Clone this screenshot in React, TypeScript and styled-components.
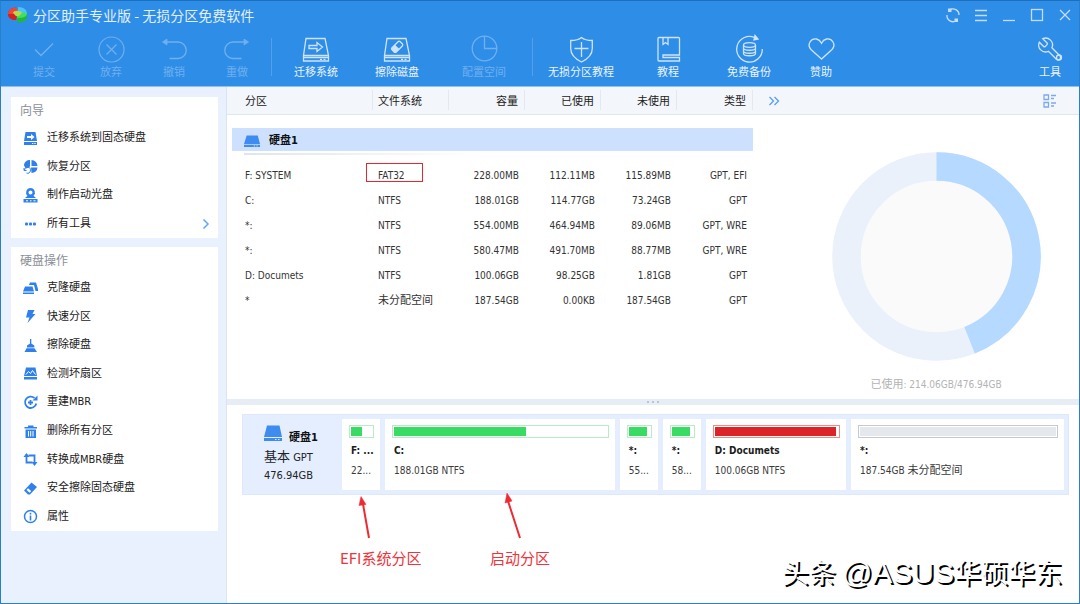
import React from "react";
import styled, { createGlobalStyle } from "styled-components";

const Global = createGlobalStyle`
  *, *::before, *::after { box-sizing: border-box; }
  body {
    margin: 0;
    font-family: "DejaVu Sans Condensed", "Noto Sans CJK SC", sans-serif;
    font-size: 11px;
    line-height: 16px;
    color: #222;
    background: #fff;
  }
  button {
    margin: 0;
    padding: 0;
    border: 0;
    background: none;
    color: inherit;
    font: inherit;
    cursor: pointer;
  }
  ul { margin: 0; padding: 0; list-style: none; }
  h1, h2, p { margin: 0; font: inherit; }
  svg { display: block; flex: none; }
`;

const Window = styled.div`
  display: flex;
  flex-direction: column;
  min-height: 100vh;
  border: 1px solid #2b7fc9;
  border-top-color: #1b6fbd;
`;

/* ---------- header ---------- */

const Header = styled.header`
  color: #fff;
  background: #2e8de7;
  border-bottom: 1px solid #8fc1f3;
`;

const TitleBar = styled.div`
  display: flex;
  align-items: center;
  height: 28px;
  padding-left: 7px;
`;

const Title = styled.h1`
  flex: 1;
  margin-left: 6px;
  font-family: "Noto Sans CJK SC", sans-serif;
  font-size: 14px;
  line-height: 20px;
  color: #e2effd;
`;

const WindowButton = styled.button`
  display: grid;
  place-items: center;
  width: 28px;
  height: 28px;
  color: #c3defa;
`;

const Toolbar = styled.nav`
  display: flex;
  align-items: flex-start;
  height: 57px;
  padding-left: 9px;
`;

const ToolGroup = styled.div<{ $columns: string }>`
  display: grid;
  grid-template-columns: ${(p) => p.$columns};
`;

const ToolButton = styled.button`
  display: flex;
  flex-direction: column;
  align-items: center;
  gap: 3px;
  padding-top: 5px;
  white-space: nowrap;
  color: #cfe4fb;
  &:disabled { color: #6fb0ef; cursor: default; }
`;

const ToolLabel = styled.span<{ $dim?: boolean }>`
  line-height: 16px;
  color: ${(p) => (p.$dim ? "#6fb0ef" : "#eaf4ff")};
`;

const Divider = styled.span<{ $before: number; $after: number }>`
  width: 1px;
  height: 38px;
  margin: 9px ${(p) => p.$after}px 0 ${(p) => p.$before}px;
  background: #559fea;
`;

const ToolEnd = styled.div`
  display: grid;
  width: 58px;
  margin-left: auto;
`;

/* ---------- sidebar ---------- */

const Body = styled.div`
  display: flex;
  flex: 1;
`;

const Sidebar = styled.aside`
  display: flex;
  flex-direction: column;
  gap: 9px;
  width: 226px;
  padding: 10px 8px 10px 10px;
  background: #eaf1fe;
  border-right: 1px solid #dbe4f0;
`;

const Panel = styled.section`
  padding: 4px 0 0;
  background: #fff;
`;

const PanelTitle = styled.h2`
  padding: 0 0 3px 9px;
  font-size: 12px;
  line-height: 20px;
  color: #8b8f96;
`;

const PanelList = styled.ul<{ $height: number }>`
  display: grid;
  grid-auto-rows: 1fr;
  min-height: ${(p) => p.$height}px;
`;

const PanelItem = styled.button`
  display: flex;
  align-items: center;
  width: 100%;
  height: 100%;
  padding: 0 7px 0 12px;
  color: #1b1b1b;
  text-align: left;
`;

const PanelText = styled.span`
  flex: 1;
  margin-left: 9px;
`;

/* ---------- partition table ---------- */

const Main = styled.main`
  display: flex;
  flex: 1;
  flex-direction: column;
  min-width: 0;
`;

const TopPane = styled.section`
  display: grid;
  grid-template-columns: auto 1fr;
`;

const Table = styled.table`
  align-self: start;
  width: 526px;
  table-layout: fixed;
  border-collapse: separate;
  border-spacing: 0;
  font-size: 10px;
`;

const HeadCell = styled.th<{ $right?: boolean }>`
  height: 28px;
  padding: 2px 7px 0 ${(p) => (p.$right ? 0 : 5)}px;
  font-size: 11px;
  font-weight: 400;
  text-align: ${(p) => (p.$right ? "right" : "left")};
  background: linear-gradient(#e3e9f1, #e3e9f1) right 3px / 1px 20px no-repeat #f3f6fb;
  border-bottom: 1px solid #dee6f0;
  &:first-child { padding-left: 18px; }
`;

const DiskCell = styled.th`
  padding: 13px 0 12px 5px;
  font-size: 11px;
  text-align: left;
`;

const DiskBand = styled.div`
  display: flex;
  align-items: center;
  gap: 9px;
  height: 23px;
  padding: 2px 0 0 12px;
  color: #111;
  background: #cde1fe;
`;

const DiskRule = styled.div`
  height: 2px;
  margin: 2px 270px -4px 12px;
  background: linear-gradient(90deg, #dfe5ee, #fff);
`;

const Cell = styled.td<{ $right?: boolean }>`
  position: relative;
  height: 25px;
  padding: 1px 6px 0 ${(p) => (p.$right ? 0 : 5)}px;
  text-align: ${(p) => (p.$right ? "right" : "left")};
  white-space: nowrap;
  color: #333;
  &:first-child { padding-left: 18px; }
`;

const Han = styled.span`
  font-size: 11px;
`;

const Highlight = styled.span`
  position: absolute;
  top: 0;
  left: -7px;
  width: 57px;
  height: 19px;
  border: 1px solid #e8262e;
`;

/* ---------- usage chart ---------- */

const ChartSide = styled.div`
  display: flex;
  flex-direction: column;
`;

const ChartHead = styled.div`
  display: flex;
  align-items: center;
  justify-content: space-between;
  height: 28px;
  padding: 0 23px 0 15px;
  background: #f3f6fb;
  border-bottom: 1px solid #dee6f0;
`;

const ChartFigure = styled.figure`
  display: flex;
  flex-direction: column;
  align-items: center;
  gap: 16px;
  margin: 0;
  padding: 37px 0 6px 40px;
`;

const ChartCaption = styled.figcaption`
  font-size: 10px;
  color: #b3b3b3;
`;

/* ---------- disk map ---------- */

const Splitter = styled.div`
  display: flex;
  align-items: center;
  justify-content: center;
  gap: 3px;
  height: 6px;
  background: #e6edf5;
`;

const SplitterDot = styled.span`
  width: 2px;
  height: 2px;
  background: #b9c6d6;
`;

const BottomPane = styled.section`
  position: relative;
  flex: 1;
  padding: 9px 10px 107px 15px;
`;

const DiskMap = styled.div`
  display: flex;
  padding: 4px 4px 4px 0;
  background: #e4eefe;
  border: 1px solid #dde9fa;
`;

const DiskInfo = styled.div`
  width: 99px;
  padding: 6px 0 0 21px;
`;

const DiskName = styled.div`
  display: flex;
  align-items: flex-end;
  gap: 7px;
  height: 21px;
  margin-bottom: 2px;
  font-weight: 700;
  color: #111;
  & > svg { align-self: flex-start; }
`;

const DiskKind = styled.p`
  font-size: 11px;
  line-height: 18px;
`;

const KindName = styled.span`
  font-size: 13px;
`;

const Partitions = styled.div`
  display: grid;
  flex: 1;
  grid-template-columns: 38px 231fr 38px 38px 141fr 214fr;
  gap: 5px;
  min-width: 0;
`;

const Partition = styled.button`
  min-width: 0;
  padding: 6px 6px 10px 7px;
  background: #fff;
  text-align: left;
  font-size: 10px;
`;

const Bar = styled.div<{ $edge: string }>`
  height: 13px;
  padding: 1px;
  border: 1px solid ${(p) => p.$edge};
  background: #fff;
`;

const BarFill = styled.div<{ $color: string }>`
  height: 9px;
  background: ${(p) => p.$color};
`;

const PartText = styled.div<{ $strong?: boolean }>`
  overflow: hidden;
  padding-left: 2px;
  font-weight: ${(p) => (p.$strong ? 700 : 400)};
  line-height: 18px;
  margin-top: ${(p) => (p.$strong ? 4 : 2)}px;
  white-space: nowrap;
  color: ${(p) => (p.$strong ? "#1c1c1c" : "#3a3a3a")};
`;

const Note = styled.p<{ $left: number }>`
  position: absolute;
  top: 143px;
  left: ${(p) => p.$left}px;
  font-family: "Noto Sans CJK SC", sans-serif;
  font-size: 15px;
  line-height: 20px;
  color: #f0323a;
`;

const Arrows = styled.svg`
  position: absolute;
  top: 87px;
  left: 127px;
`;

const Signature = styled.p`
  position: absolute;
  right: 17px;
  bottom: 12px;
  font-family: "Noto Sans CJK SC", sans-serif;
  font-size: 27px;
  line-height: 36px;
  color: #fff;
  text-shadow: 2px 2px 0 #000;
  white-space: nowrap;
`;

const Handle = styled.span`
  font-family: "Liberation Sans", sans-serif;
  font-size: 30px;
`;

/* ---------- icons ---------- */

const blue = "#2f80ed";

const Line = ({ w = 28, h = 28, children }: { w?: number; h?: number; children: React.ReactNode }) => (
  <svg width={w} height={h} viewBox={`0 0 ${w} ${h}`} fill="none" stroke="currentColor" strokeWidth="1.3" overflow="visible" aria-hidden="true">
    {children}
  </svg>
);

const Drive = () => (
  <>
    <path d="M4 4.500H23L26.500 21.500H1.500Z M1.500 21.500V27H26.500V21.500 M1.500 23.500H26.500" />
    <path d="M18 25.300h2M21.500 25.300h2" />
  </>
);

const toolIcons: Record<string, React.ReactNode> = {
  commit: <Line><path d="M5 15.500l6 6L23 9.500" /></Line>,
  discard: <Line><circle cx="14.500" cy="15.500" r="12.500" strokeWidth="1.200" /><path d="M9.500 10.500l10 10M19.500 10.500l-10 10" /></Line>,
  undo: <Line><path d="M5 8H18a8 8 0 0 1 0 16.500H9.500" /><path d="M7 5v6L2.500 8z" fill="currentColor" strokeWidth="0.800" /></Line>,
  redo: <Line><path d="M23 8H10a8 8 0 0 0 0 16.500H18.500" /><path d="M21 5v6L25.500 8z" fill="currentColor" strokeWidth="0.800" /></Line>,
  migrate: <Line><Drive /><path d="M7 11.500h8V8.500l5.500 4.500-5.500 4.500v-3H7z" /></Line>,
  wipe: <Line><Drive /><g transform="rotate(-45 14 13)"><rect x="8.500" y="10" width="11.500" height="6" rx="1.500" /><path d="M9 10.500h4.500v5H9z" fill="currentColor" /></g></Line>,
  space: <Line><circle cx="14.500" cy="14.500" r="12.300" /><path d="M14.500 2v12.500H27" /></Line>,
  shield: <Line><path d="M14.500 3.500c3 2.500 7 3 10.800 3v8c0 6-4.800 10.500-10.800 13.500C8.500 25 3.700 20.500 3.700 14.500v-8c3.800 0 7.800-.5 10.800-3z" /><path d="M14.500 8v15M7.500 14.500h14" /></Line>,
  book: <Line><path d="M4 26V4.500q0-1 1-1H24.500q1 0 1 1V21H9v2.500H25.500V27H5q-1 0-1-1z" /><path d="M9 3.500v7l2.500-2 2.500 2v-7" /></Line>,
  backup: <Line><path d="M19.500 3.500A12.800 12.800 0 1 0 27.300 15" /><path d="M20 1.500l3 3.500-4 .8z" fill="currentColor" /><ellipse cx="14.500" cy="11" rx="6" ry="2.300" /><path d="M8.500 11v8.500c0 3 12 3 12 0v-8.500M8.500 14c0 3 12 3 12 0M8.500 17c0 3 12 3 12 0" /></Line>,
  heart: <Line><path d="M14.500 25L4 15.500C-.5 10.500 4 4 9.500 5c2.500.6 4 2.200 5 4.200 1-2 2.500-3.600 5-4.200 5.500-1 10 5.500 5.500 10.500z" /></Line>,
  wrench: (
    <Line>
      <path
        transform="matrix(-1.150 0 0 1.150 28 1.800)"
        d="M14.700 6.300a1 1 0 0 0 0 1.400l1.600 1.600a1 1 0 0 0 1.400 0l3.770-3.770a6 6 0 0 1-7.940 7.940l-6.910 6.910a2.120 2.120 0 0 1-3-3l6.910-6.910a6 6 0 0 1 7.940-7.940l-3.760 3.760z"
        strokeWidth="1.150"
      />
      <circle cx="23" cy="23.500" r="2.500" />
    </Line>
  ),
};

const Small = ({ children }: { children: React.ReactNode }) => (
  <svg width="15" height="15" viewBox="0 0 15 15" fill={blue} aria-hidden="true">{children}</svg>
);

const sideIcons: Record<string, React.ReactNode> = {
  migrate: <Small><path d="M2.500 1h10l1.500 9H1zM1 11h13v3H1z" /><path d="M4 5h4V3l3.500 3L8 9V7H4z" fill="#fff" /><path d="M9 12.500h1.300M11.300 12.500h1.300" stroke="#fff" /></Small>,
  recover: <Small><path d="M7 1v6.500L3.500 9.500A6 6 0 0 1 1 6.500C1 3 4 1 7 1zM8.500 1A6.200 6.200 0 0 1 14.500 7H8.500zM8 8.500h6.500a6.200 6.200 0 0 1-6 5.500z" /><path d="M1.500 11a3 3 0 1 1 2 3M1 9v2.500h2.500" fill="none" stroke={blue} /></Small>,
  disc: <Small><path fillRule="evenodd" d="M7.500 0a4.500 4.500 0 0 1 3 7.800L13 10H2l2.500-2.200A4.500 4.500 0 0 1 7.500 0zm0 2.500a2 2 0 1 0 0 4 2 2 0 0 0 0-4z" /><path d="M.5 11h14v3.500H.5z" /><path d="M3 12.800h2M7 12.800h1.500M10.500 12.800h2" stroke="#fff" /></Small>,
  dots: <Small><rect x="2" y="6.500" width="3" height="3" rx="1" /><rect x="6" y="6.500" width="3" height="3" rx="1" /><rect x="10" y="6.500" width="3" height="3" rx="1" /></Small>,
  clone: <Small><path d="M6 4l1-2.500h6L15 8v2h-2.500L11 4z" /><path d="M2 5.500h7.500l1.500 5H0zM0 11.500h11V13H0z" /></Small>,
  bolt: <Small><path d="M5 1h6.500L9.500 5H12.500L4.500 14l2-5.500H3z" /></Small>,
  broom: <Small><path d="M7 1h1.300v4.500l3 2V9.500H4V7.500l3-2zM3.500 10.200h8L14 14H1.500z" /></Small>,
  scan: <Small><path d="M3 1.500h9.500L14 10H1z M1 11h13v2.500H1z" /><path d="M3 8.500l2.500-3 2 2 2-3 3 4" fill="none" stroke="#fff" /></Small>,
  rebuild: <Small><path d="M11.500 3A5.700 5.700 0 1 0 13.300 8.500" fill="none" stroke={blue} strokeWidth="1.800" /><path d="M9.500 5.500h5v-5z" /><path d="M7.500 5v5M5 7.500h5" stroke={blue} strokeWidth="1.800" /></Small>,
  trash: <Small><path d="M5 1.500h5.500V3H14v1.500H1.500V3H5z" /><path d="M2.500 5.500h10.500V14H2.500z" /><path d="M5.500 7v5.500M7.700 7v5.500M10 7v5.500" stroke="#fff" /></Small>,
  convert: <Small><path d="M3.500 2.500V10.500H9.500M5.500 3.500H11.500V11" fill="none" stroke={blue} strokeWidth="1.800" /><path d="M0.500 5l3-4 3 4zM8.500 10l3 4 3-4z" /></Small>,
  eraser: <Small><path d="M8.500 1.500l5.500 4.500L7 13.500H5L1 9.500z" /><path d="M3.500 9l3.200 2.700L8.200 10 5 7.300z" fill="#fff" /></Small>,
  info: <Small><circle cx="7.500" cy="7.500" r="6" fill="none" stroke={blue} strokeWidth="1.500" /><path d="M6.700 3.800h1.600v1.600H6.700zM6.700 6.500h1.600v5H6.700z" /></Small>,
};

const DiskIcon = ({ w, h }: { w: number; h: number }) => (
  <svg width={w} height={h} viewBox="0 0 18 16" preserveAspectRatio="none" fill="#3f8cf0" aria-hidden="true">
    <path d="M3 0.500h12.500L18 12H0zM0 13h18v3H0z" />
    <path d="M11 14.500h1.500M14 14.500h1.500" stroke="#d6e6fe" />
  </svg>
);

/* ---------- data ---------- */

type Tool = { icon: string; label: string; disabled?: boolean };

const editTools: Tool[] = [
  { icon: "commit", label: "提交", disabled: true },
  { icon: "discard", label: "放弃", disabled: true },
  { icon: "undo", label: "撤销", disabled: true },
  { icon: "redo", label: "重做", disabled: true },
];
const diskTools: Tool[] = [
  { icon: "migrate", label: "迁移系统" },
  { icon: "wipe", label: "擦除磁盘" },
  { icon: "space", label: "配置空间", disabled: true },
];
const helpTools: Tool[] = [
  { icon: "shield", label: "无损分区教程" },
  { icon: "book", label: "教程" },
  { icon: "backup", label: "免费备份" },
  { icon: "heart", label: "赞助" },
];

const wizards = [
  ["migrate", "迁移系统到固态硬盘"],
  ["recover", "恢复分区"],
  ["disc", "制作启动光盘"],
  ["dots", "所有工具"],
];
const operations = [
  ["clone", "克隆硬盘"],
  ["bolt", "快速分区"],
  ["broom", "擦除硬盘"],
  ["scan", "检测坏扇区"],
  ["rebuild", "重建MBR"],
  ["trash", "删除所有分区"],
  ["convert", "转换成MBR硬盘"],
  ["eraser", "安全擦除固态硬盘"],
  ["info", "属性"],
];

const rows = [
  ["F: SYSTEM", "FAT32", "228.00MB", "112.11MB", "115.89MB", "GPT, EFI"],
  ["C:", "NTFS", "188.01GB", "114.77GB", "73.24GB", "GPT"],
  ["*:", "NTFS", "554.00MB", "464.94MB", "89.06MB", "GPT, WRE"],
  ["*:", "NTFS", "580.47MB", "491.70MB", "88.77MB", "GPT, WRE"],
  ["D: Documets", "NTFS", "100.06GB", "98.25GB", "1.81GB", "GPT"],
  ["*", "未分配空间", "187.54GB", "0.00KB", "187.54GB", "GPT"],
];

const green = { edge: "#b9ecc5", fill: "#38dc62" };
const red = { edge: "#ee8d84", fill: "#dc2328" };
const grey = { edge: "#c6cad0", fill: "#e5e8ed" };

const partitions = [
  { name: "F: ...", size: "22...", used: 52, tone: green },
  { name: "C:", size: "188.01GB NTFS", used: 62, tone: green },
  { name: "*:", size: "55...", used: 86, tone: green },
  { name: "*:", size: "58...", used: 86, tone: green },
  { name: "D: Documets", size: "100.06GB NTFS", used: 98, tone: red },
  { name: "*:", size: "187.54GB ", kind: "未分配空间", used: 100, tone: grey },
];

/* ---------- parts ---------- */

const Tools = ({ items, columns }: { items: Tool[]; columns: string }) => (
  <ToolGroup $columns={columns}>
    {items.map((t) => (
      <ToolButton key={t.label} type="button" disabled={t.disabled}>
        {toolIcons[t.icon]}
        <ToolLabel $dim={t.disabled}>{t.label}</ToolLabel>
      </ToolButton>
    ))}
  </ToolGroup>
);

const SidePanel = ({ title, items, height }: { title: string; items: string[][]; height: number }) => (
  <Panel>
    <PanelTitle>{title}</PanelTitle>
    <PanelList $height={height}>
      {items.map(([icon, label]) => (
        <li key={label}>
          <PanelItem type="button">
            {sideIcons[icon]}
            <PanelText>{label}</PanelText>
            {icon === "dots" && (
              <svg width="10" height="12" viewBox="0 0 10 12" fill="none" stroke="#5fa8f5" strokeWidth="1.500" aria-hidden="true">
                <path d="M2.500 1.500L7 6l-4.500 4.500" />
              </svg>
            )}
          </PanelItem>
        </li>
      ))}
    </PanelList>
  </Panel>
);

export default function App() {
  return (
    <>
      <Global />
      <Window>
        <Header>
          <TitleBar>
            <svg width="19" height="16" viewBox="0 0 19 16" aria-hidden="true">
              <path d="M0 7C0 2 5 0 9 1v3L7 8l2 2-1 3C3 13 0 11 0 7z" fill="#d5201f" />
              <path d="M0 7C0 2 5 0 9 1v3L5 7z" fill="#f0453a" />
              <path d="M10 0c6 0 9 3 9 7h-5l-4-3z" fill="#4cc3f5" />
              <path d="M9 9l5-3h5v4c0 4-5 6-10 5z" fill="#1fb83c" />
              <path d="M9 9l5-3h5c0 4-4 5-10 5z" fill="#3fe05a" />
              <path d="M5 6c0-3 8-3 9 0l-3 3H8z" fill="#b6d94a" />
            </svg>
            <Title>分区助手专业版 - 无损分区免费软件</Title>
            <WindowButton type="button" aria-label="刷新">
              <Line w={16} h={16}>
                <path d="M4.500 3a6 6 0 0 1 9.500 5M11.500 13.500A6 6 0 0 1 2 8" />
                <path d="M3 1.500h3.500v3.500H3zM9.500 11.500H13V15H9.500z" fill="currentColor" stroke="none" />
              </Line>
            </WindowButton>
            <WindowButton type="button" aria-label="菜单">
              <Line w={14} h={14}><path d="M1 2.500h12M1 7.500h12M1 12.500h12" /></Line>
            </WindowButton>
            <WindowButton type="button" aria-label="最小化">
              <Line w={14} h={14}><path d="M1 12.500h12" /></Line>
            </WindowButton>
            <WindowButton type="button" aria-label="最大化">
              <Line w={14} h={14}><rect x="1.500" y="1.500" width="11" height="11" /></Line>
            </WindowButton>
            <WindowButton type="button" aria-label="关闭">
              <Line w={14} h={14}><path d="M2 2l10 10M12 2L2 12" /></Line>
            </WindowButton>
          </TitleBar>
          <Toolbar>
            <Tools items={editTools} columns="68px 66px 60px 66px" />
            <Divider $before={1} $after={4} />
            <Tools items={diskTools} columns="80px 82px 92px" />
            <Divider $before={2} $after={1} />
            <Tools items={helpTools} columns="94px 80px 82px 62px" />
            <ToolEnd>
              <ToolButton type="button">
                {toolIcons.wrench}
                <ToolLabel>工具</ToolLabel>
              </ToolButton>
            </ToolEnd>
          </Toolbar>
        </Header>

        <Body>
          <Sidebar>
            <SidePanel title="向导" items={wizards} height={114} />
            <SidePanel title="硬盘操作" items={operations} height={257} />
          </Sidebar>

          <Main>
            <TopPane>
              <Table>
                <colgroup>
                  <col />
                  <col width="76" />
                  <col width="76" />
                  <col width="76" />
                  <col width="76" />
                  <col width="76" />
                </colgroup>
                <thead>
                  <tr>
                    {["分区", "文件系统", "容量", "已使用", "未使用", "类型"].map((h, i) => (
                      <HeadCell key={h} scope="col" $right={i > 1}>{h}</HeadCell>
                    ))}
                  </tr>
                </thead>
                <tbody>
                  <tr>
                    <DiskCell colSpan={6} scope="rowgroup">
                      <DiskBand>
                        <DiskIcon w={16} h={12} />
                        <span>硬盘1</span>
                      </DiskBand>
                      <DiskRule />
                    </DiskCell>
                  </tr>
                  {rows.map((r, i) => (
                    <tr key={i}>
                      {r.map((c, j) => (
                        <Cell key={j} $right={j > 1}>
                          {c === "未分配空间" ? <Han>{c}</Han> : c}
                          {c === "FAT32" && <Highlight />}
                        </Cell>
                      ))}
                    </tr>
                  ))}
                </tbody>
              </Table>

              <ChartSide>
                <ChartHead>
                  <button type="button" aria-label="更多列">
                    <svg width="12" height="12" viewBox="0 0 12 12" fill="none" stroke="#5a9df5" strokeWidth="1.300" aria-hidden="true">
                      <path d="M1.500 2l4 4-4 4M6.500 2l4 4-4 4" />
                    </svg>
                  </button>
                  <button type="button" aria-label="视图">
                    <svg width="13" height="14" viewBox="0 0 13 14" fill="none" stroke="#7aaaf0" strokeWidth="1.300" aria-hidden="true">
                      <path d="M1 1h4.500v4.500H1zM1 8.500h4.500V13H1zM8 1.500h5M8 4.500h3M8 9h5M8 12h3" />
                    </svg>
                  </button>
                </ChartHead>
                <ChartFigure>
                  <svg width="209" height="209" viewBox="0 0 209 209" aria-hidden="true">
                    <circle cx="104.500" cy="104.500" r="90" fill="#fafafa" stroke="#eaf1fa" strokeWidth="28.500" />
                    <path d="M104.500 14.500A90 90 0 0 1 137.600 188.200" fill="none" stroke="#b5d9ff" strokeWidth="28.500" />
                  </svg>
                  <ChartCaption><Han>已使用</Han>: 214.06GB/476.94GB</ChartCaption>
                </ChartFigure>
              </ChartSide>
            </TopPane>

            <Splitter>
              <SplitterDot />
              <SplitterDot />
              <SplitterDot />
            </Splitter>

            <BottomPane>
              <DiskMap>
                <DiskInfo>
                  <DiskName>
                    <DiskIcon w={18} h={16} />
                    <span>硬盘1</span>
                  </DiskName>
                  <DiskKind><KindName>基本</KindName> GPT</DiskKind>
                  <DiskKind>476.94GB</DiskKind>
                </DiskInfo>
                <Partitions>
                  {partitions.map((p, i) => (
                    <Partition key={i} type="button">
                      <Bar $edge={p.tone.edge}>
                        <BarFill $color={p.tone.fill} style={{ width: `${p.used}%` }} />
                      </Bar>
                      <PartText $strong>{p.name}</PartText>
                      <PartText>{p.size}{p.kind && <Han>{p.kind}</Han>}</PartText>
                    </Partition>
                  ))}
                </Partitions>
              </DiskMap>

              <Arrows width="180" height="50" viewBox="0 0 180 50" fill="#ee2a32" stroke="#ee2a32" aria-hidden="true">
                <path d="M15 46L9 12M166 46L154 9" strokeWidth="2" />
                <path d="M7 4.500l5 8-7 1zM153 1l5 8-7 2z" strokeWidth="0.500" />
              </Arrows>
              <Note $left={113}>EFI系统分区</Note>
              <Note $left={263}>启动分区</Note>
              <Signature>头条 <Handle>@ASUS</Handle>华硕华东</Signature>
            </BottomPane>
          </Main>
        </Body>
      </Window>
    </>
  );
}
